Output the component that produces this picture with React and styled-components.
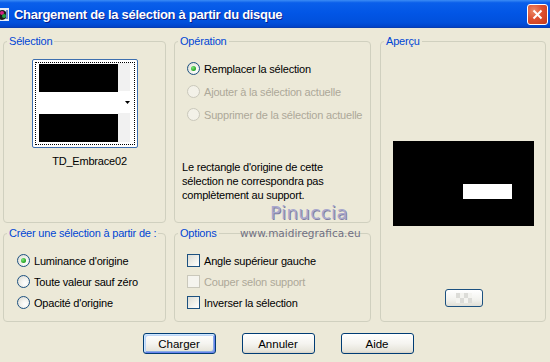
import React from "react";
import styled, { createGlobalStyle, css } from "styled-components";

const GlobalStyle = createGlobalStyle`
  html, body {
    margin: 0;
    padding: 0;
    background: #ece9d8;
  }
  body {
    font-family: "Liberation Sans", Arial, sans-serif;
    font-size: 11px;
  }
`;

const Window = styled.div`
  position: relative;
  width: 550px;
  height: 362px;
  background: #ece9d8;
  overflow: hidden;
  display: flex;
  flex-direction: column;
`;

const TitleBar = styled.div`
  height: 28px;
  flex: none;
  display: flex;
  align-items: center;
  padding-right: 2px;
  background: linear-gradient(
    to bottom,
    #3b8cf5 0%,
    #0a5fea 10%,
    #0256e6 45%,
    #0150dc 80%,
    #0045cc 94%,
    #0a3aa8 100%
  );
  box-sizing: border-box;
`;

const TitleIcon = styled.svg`
  width: 9px;
  height: 14px;
  flex: none;
  margin-top: 1px;
`;

const TitleText = styled.div`
  flex: 1;
  margin-left: 5px;
  color: #ffffff;
  font-family: "Liberation Sans", Arial, sans-serif;
  font-weight: bold;
  font-size: 13px;
  letter-spacing: -0.3px;
  text-shadow: 1px 1px 0 #0a1e8c;
`;

const CloseButton = styled.div`
  width: 19px;
  height: 19px;
  border: 1px solid #ffffff;
  border-radius: 3px;
  background: radial-gradient(circle at 30% 30%, #ec8a67 0%, #dd5131 45%, #c4391a 100%);
  display: flex;
  align-items: center;
  justify-content: center;
  margin-top: 1px;
`;

const Body = styled.div`
  flex: 1;
  display: flex;
  flex-direction: column;
  padding: 7px 4px 0 3px;
  font-size: 11px;
  letter-spacing: -0.2px;
`;

const Grid = styled.div`
  display: grid;
  grid-template-columns: 163px 197px 167px;
  grid-template-rows: 188px 95px;
  column-gap: 8px;
  row-gap: 4px;
`;

const Group = styled.fieldset`
  margin: 0;
  padding: 0;
  min-width: 0;
  border: 1px solid #d0d0bf;
  border-radius: 4px;
  ${(p) =>
    p.$tall &&
    css`
      grid-column: 3;
      grid-row: 1 / span 2;
      margin-left: 1px;
    `}
`;

const Legend = styled.legend`
  margin-left: 3px;
  padding: 0 2px;
  color: #0046d5;
  font-size: 11px;
  line-height: 13px;
  white-space: nowrap;
`;

const SelectionBox = styled.div`
  display: flex;
  flex-direction: column;
  align-items: center;
  padding: 11px 0 0 1px;
`;

const Thumb = styled.div`
  width: 100px;
  height: 83px;
  border: 1px solid #3e6fae;
  border-radius: 2px;
  padding: 2px;
  box-sizing: content-box;
  background: #ffffff;
  display: flex;
`;

const ThumbInner = styled.div`
  flex: 1;
  border: 1px dotted #000000;
  display: flex;
`;

const ThumbName = styled.div`
  margin-top: 7px;
  padding-left: 9px;
  color: #000000;
`;

const Pane = styled.div`
  display: flex;
  flex-direction: column;
  padding: ${(p) => p.$pad || "9px 0 0 12px"};
`;

const Row = styled.label`
  display: flex;
  align-items: center;
  height: ${(p) => p.$h || 23}px;
  gap: 3px;
  color: ${(p) => (p.$disabled ? "#aca899" : "#000000")};
  white-space: nowrap;
`;

const Radio = styled.span`
  width: 11px;
  height: 11px;
  flex: none;
  border-radius: 50%;
  border: 1px solid ${(p) => (p.$disabled ? "#cac8bb" : "#1c5180")};
  background: ${(p) =>
    p.$disabled
      ? "#f3f1e8"
      : "radial-gradient(circle at 65% 65%, #ffffff 0%, #f3f3ef 40%, #d6d5cc 100%)"};
  display: flex;
  align-items: center;
  justify-content: center;
  margin-right: 1px;
  &::after {
    content: "";
    display: ${(p) => (p.$checked ? "block" : "none")};
    width: 5px;
    height: 5px;
    border-radius: 50%;
    background: radial-gradient(circle at 35% 35%, #7fe67a 0%, #21a121 70%, #1a8a1a 100%);
  }
`;

const Check = styled.span`
  width: 11px;
  height: 11px;
  flex: none;
  border: 1px solid ${(p) => (p.$disabled ? "#cac8bb" : "#1c5180")};
  background: ${(p) =>
    p.$disabled
      ? "#f5f4ee"
      : "linear-gradient(135deg, #dcdcd5 0%, #f0f0ea 55%, #ffffff 100%)"};
  margin-right: 1px;
`;

const Note = styled.p`
  margin: 34px 0 0 -5px;
  line-height: 14px;
  color: #000000;
`;

const PreviewBox = styled.div`
  display: flex;
  flex-direction: column;
  align-items: center;
  padding-top: 93px;
`;

const PreviewImage = styled.svg`
  width: 141px;
  height: 85px;
  display: block;
`;

const SmallButton = styled.div`
  margin-top: 63px;
  margin-left: 2px;
  width: 36px;
  height: 16px;
  border: 1px solid #1c5180;
  border-radius: 3px;
  background: linear-gradient(to bottom, #ffffff, #f2f2ee 60%, #e0dfd6);
  display: flex;
  align-items: center;
  justify-content: center;
`;

const ButtonBar = styled.div`
  display: flex;
  justify-content: center;
  gap: 26px;
  padding: 11px 0 0 7px;
`;

const Button = styled.button`
  width: 73px;
  height: 21px;
  padding: 0;
  border: 1px solid #003c74;
  border-radius: 3px;
  background: linear-gradient(to bottom, #ffffff 0%, #f5f4f0 50%, #e6e4da 90%, #d6d0c5 100%);
  font-family: "Liberation Sans", Arial, sans-serif;
  font-size: 11.5px;
  color: #000000;
  ${(p) =>
    p.$default &&
    css`
      box-shadow: inset 1px 1px 0 #cee7ff, inset -1px -1px 0 #6982ee, inset 2px 2px 0 #bcd4f6,
        inset -2px -2px 0 #89ade4;
    `}
`;

const Watermark = styled.div`
  position: absolute;
  left: 240px;
  top: 203px;
  display: flex;
  flex-direction: column;
  pointer-events: none;
`;

const WatermarkName = styled.div`
  font-family: "DejaVu Sans", sans-serif;
  font-size: 18px;
  line-height: 20px;
  color: #a9a8cd;
  letter-spacing: 0.5px;
  text-shadow: 1px 1px 0 #7f7ea3;
  padding-left: 30px;
`;

const WatermarkUrl = styled.div`
  font-family: "DejaVu Sans", sans-serif;
  font-size: 10.5px;
  line-height: 12px;
  color: #707083;
  margin-top: 4px;
`;

const Checker = () => (
  <svg width="16" height="10" viewBox="0 0 16 10">
    <rect width="16" height="10" fill="#f4f4f0" />
    <rect x="0" y="0" width="4" height="5" fill="#dcdcd8" />
    <rect x="8" y="0" width="4" height="5" fill="#dcdcd8" />
    <rect x="4" y="5" width="4" height="5" fill="#dcdcd8" />
    <rect x="12" y="5" width="4" height="5" fill="#dcdcd8" />
  </svg>
);

const operations = [
  { label: "Remplacer la sélection", checked: true },
  { label: "Ajouter à la sélection actuelle", disabled: true },
  { label: "Supprimer de la sélection actuelle", disabled: true },
];

const sources = [
  { label: "Luminance d'origine", checked: true },
  { label: "Toute valeur sauf zéro" },
  { label: "Opacité d'origine" },
];

const options = [
  { label: "Angle supérieur gauche" },
  { label: "Couper selon support", disabled: true },
  { label: "Inverser la sélection" },
];

const App = () => {
  return (
    <Window>
      <GlobalStyle />
      <TitleBar>
        <TitleIcon viewBox="0 0 9 14">
          <rect x="0" y="0" width="9" height="13" fill="#e8eef8" />
          <circle cx="2" cy="7" r="5" fill="#1a1a1a" />
          <circle cx="2" cy="5" r="2" fill="#d02080" />
          <circle cx="4" cy="8" r="2" fill="#20a040" />
          <rect x="6" y="2" width="2" height="9" fill="#6a8ad0" />
        </TitleIcon>
        <TitleText>Chargement de la sélection à partir du disque</TitleText>
        <CloseButton>
          <svg width="11" height="11" viewBox="0 0 11 11">
            <path d="M1.5 1.5 L9.5 9.5 M9.5 1.5 L1.5 9.5" stroke="#ffffff" strokeWidth="2" />
          </svg>
        </CloseButton>
      </TitleBar>

      <Body>
        <Grid>
          <Group>
            <Legend>Sélection</Legend>
            <SelectionBox>
              <Thumb>
                <ThumbInner>
                  <svg width="96" height="79" viewBox="0 0 96 79">
                    <rect width="96" height="79" fill="#ffffff" />
                    <rect x="82" y="0" width="12" height="79" fill="#f1f1f1" />
                    <rect x="0" y="28" width="96" height="22" fill="#ffffff" />
                    <rect x="3" y="1" width="79" height="28" fill="#000000" />
                    <rect x="3" y="51" width="79" height="28" fill="#000000" />
                    <path d="M89 38 L94 38 L91.5 41 Z" fill="#000000" />
                  </svg>
                </ThumbInner>
              </Thumb>
              <ThumbName>TD_Embrace02</ThumbName>
            </SelectionBox>
          </Group>

          <Group>
            <Legend>Opération</Legend>
            <Pane $pad="9px 0 0 12px">
              {operations.map((o) => (
                <Row key={o.label} $disabled={o.disabled}>
                  <Radio $checked={o.checked} $disabled={o.disabled} />
                  {o.label}
                </Row>
              ))}
              <Note>
                Le rectangle d'origine de cette
                <br />
                sélection ne correspondra pas
                <br />
                complètement au support.
              </Note>
            </Pane>
          </Group>

          <Group $tall>
            <Legend>Aperçu</Legend>
            <PreviewBox>
              <PreviewImage viewBox="0 0 141 85">
                <rect width="141" height="85" fill="#000000" />
                <rect x="70" y="43" width="49" height="15" fill="#ffffff" />
              </PreviewImage>
              <SmallButton>
                <Checker />
              </SmallButton>
            </PreviewBox>
          </Group>

          <Group>
            <Legend>Créer une sélection à partir de :</Legend>
            <Pane $pad="10px 0 0 13px">
              {sources.map((s) => (
                <Row key={s.label} $h={21}>
                  <Radio $checked={s.checked} />
                  {s.label}
                </Row>
              ))}
            </Pane>
          </Group>

          <Group>
            <Legend>Options</Legend>
            <Pane $pad="10px 0 0 12px">
              {options.map((o) => (
                <Row key={o.label} $h={21} $disabled={o.disabled}>
                  <Check $disabled={o.disabled} />
                  {o.label}
                </Row>
              ))}
            </Pane>
          </Group>
        </Grid>

        <ButtonBar>
          <Button $default>Charger</Button>
          <Button>Annuler</Button>
          <Button>Aide</Button>
        </ButtonBar>
      </Body>

      <Watermark>
        <WatermarkName>Pinuccia</WatermarkName>
        <WatermarkUrl>www.maidiregrafica.eu</WatermarkUrl>
      </Watermark>
    </Window>
  );
};

export default App;
